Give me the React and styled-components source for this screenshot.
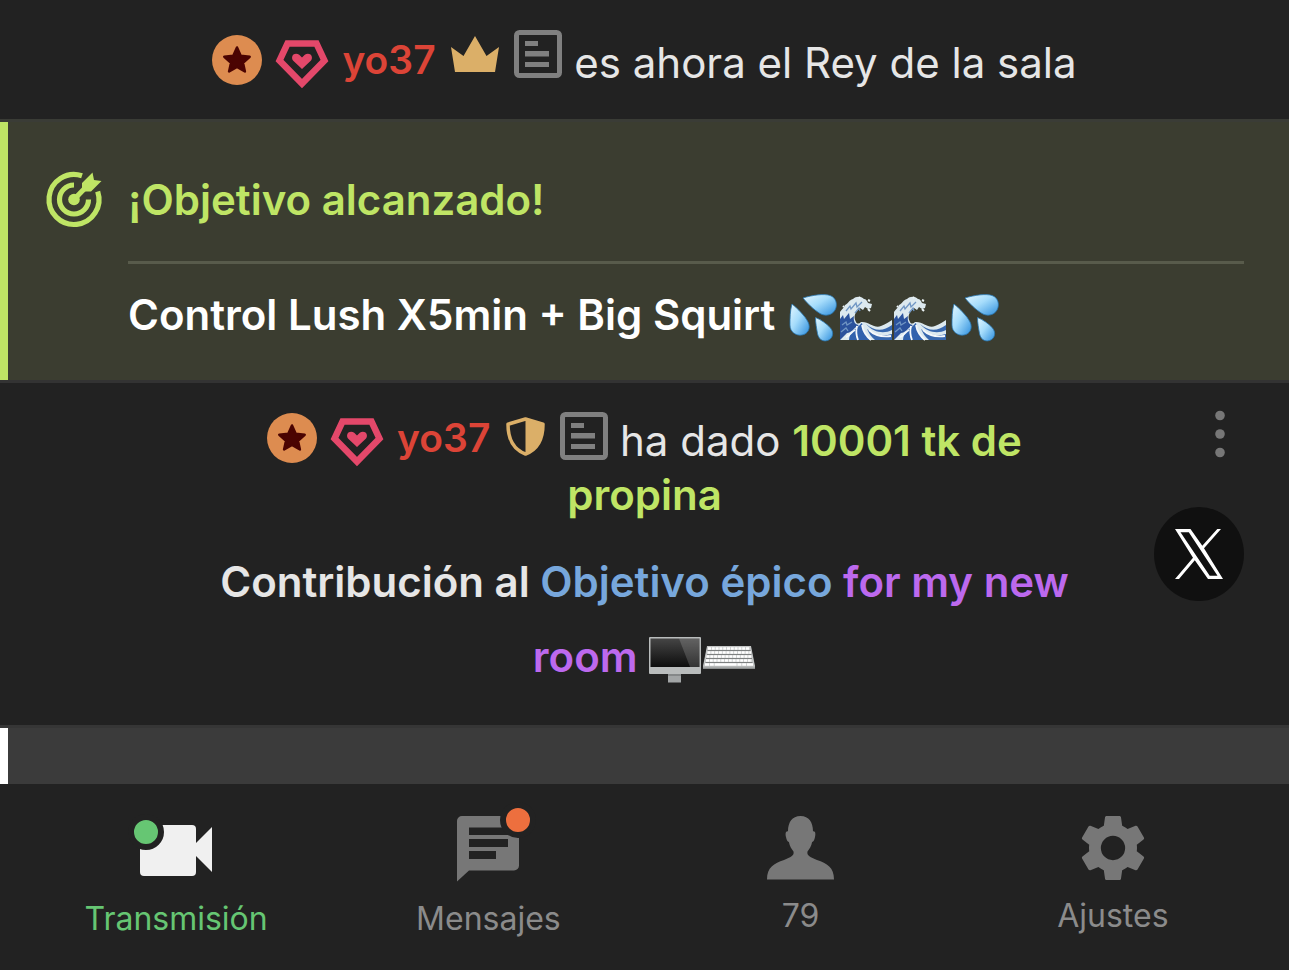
import React from 'react';
import styled, { createGlobalStyle } from 'styled-components';

const GlobalStyle = createGlobalStyle`
  * {
    box-sizing: border-box;
  }
  body {
    margin: 0;
    background: #222222;
    color: #e6e6e6;
    font-family: Inter, 'Liberation Sans', sans-serif;
    font-size: 42px;
    line-height: 54px;
  }
  button {
    border: none;
    background: none;
    padding: 0;
    font: inherit;
    color: inherit;
    cursor: pointer;
  }
  svg {
    display: block;
    flex: none;
    overflow: visible;
  }
`;

const Medal = () => (
  <svg width='50' height='50' viewBox='0 0 50 50' aria-hidden='true'>
    <circle cx='25' cy='25' r='25' fill='#dd8c50' />
    <path
      d='M25 12.500l3.700 8.200 9 1-6.700 6 1.900 8.800-7.900-4.500-7.900 4.500 1.900-8.800-6.700-6 9-1z'
      fill='#4b0402'
      stroke='#4b0402'
      strokeWidth='2.500'
      strokeLinejoin='round'
    />
  </svg>
);

const Gem = () => (
  <svg width='54' height='50' viewBox='0 0 54 50' aria-hidden='true'>
    <path
      d='M12.500 8.500h29l8 17L27 48.500 4.500 25.500z'
      fill='none'
      stroke='#e4486a'
      strokeWidth='6.500'
    />
    <path
      d='M27 34l-9-8.500c-1-1.200-1.200-3-.6-4.500 1-2.800 4.800-3 6.800-1.200L27 22.500l2.800-2.700c2-1.800 5.800-1.600 6.800 1.200.6 1.500.4 3.300-.6 4.500z'
      fill='#e4486a'
    />
  </svg>
);

const Crown = () => (
  <svg width='48' height='36' viewBox='0 0 48 36' aria-hidden='true'>
    <path d='M0 11l12.500 9L24 0l11.500 20L48 11l-4 25H4z' fill='#dbaf68' />
  </svg>
);

const Shield = () => (
  <svg width='39' height='39' viewBox='0 0 39 39' aria-hidden='true'>
    <path
      d='M19.500 2L37 7.200c0 13-3.500 24.500-17.500 29.800C5.500 31.700 2 20.200 2 7.200z'
      fill='none'
      stroke='#dbaf68'
      strokeWidth='3.500'
      strokeLinejoin='round'
    />
    <path d='M19.500 2L37 7.200c0 13-3.500 24.500-17.500 29.800z' fill='#dbaf68' />
  </svg>
);

const LogSheet = () => (
  <svg width='48' height='48' viewBox='0 0 48 48' aria-hidden='true'>
    <rect x='2.500' y='2.500' width='43' height='43' rx='3' fill='none' stroke='#808080' strokeWidth='5' />
    <path d='M11 11h13v5H11zM11 21h24v5.500H11zM11 32h24v5H11z' fill='#808080' />
  </svg>
);

const Target = () => (
  <svg width='55' height='55' viewBox='0 0 55 55' aria-hidden='true'>
    <g fill='none' stroke='#bfe565' strokeWidth='5.200'>
      <path d='M50.700 19.500A25 25 0 1 1 35 3.800' />
      <path d='M41.500 27.500A14.500 14.500 0 1 1 27 13' />
      <path d='M27 27.500L41 13' />
    </g>
    <circle cx='27' cy='27.500' r='5.800' fill='#bfe565' />
    <path d='M35 17v-6L45.500 .5l1.500 7.500 7.500 1L44 19.500h-6.500z' fill='#bfe565' />
  </svg>
);

const Dots = () => (
  <svg width='48' height='46' viewBox='0 0 48 46' aria-hidden='true'>
    <g fill='#777777'>
      <circle cx='24' cy='4.500' r='4.800' />
      <circle cx='24' cy='23' r='4.800' />
      <circle cx='24' cy='41.500' r='4.800' />
    </g>
  </svg>
);

const XLogo = () => (
  <svg width='48' height='50' viewBox='0 0 48 50' aria-hidden='true'>
    <path
      d='M0 0h15.500l11.800 16.800L42.300 0H46L29 19.200 48 50H33L19.800 31.200 4 50H0L18 28.700zM5.500 3.200L34.700 46.800h7.800L13.800 3.200z'
      fill='#ffffff'
      fillRule='evenodd'
    />
  </svg>
);

const Camera = () => (
  <svg width='72' height='70' viewBox='0 0 72 70' aria-hidden='true'>
    <rect x='0' y='12' width='56' height='51' rx='4' fill='#f0f0f0' />
    <path d='M72 14v45L56 43V30z' fill='#f0f0f0' />
  </svg>
);

const Bubble = () => (
  <svg width='62' height='70' viewBox='0 0 62 70' aria-hidden='true'>
    <path
      d='M5 3h52a5 5 0 0 1 5 5v44.500a5 5 0 0 1-5 5H12L0 68.500V8a5 5 0 0 1 5-5zM12 14.500V22h39v-7.500zM12 26v8h39v-8zM12 38v8h27v-8z'
      fill='#777777'
      fillRule='evenodd'
    />
  </svg>
);

const Person = () => (
  <svg width='67' height='64' viewBox='0 0 67 64' aria-hidden='true'>
    <path
      d='M33.500 0C42 0 46 6.500 46 15.200c2.600-.4 2.700 2.600 2 5.800-.6 2.700-1.400 5-2.900 5-.8 4.200-2.700 7-4.600 9.600-1 4.200 3 5.700 9.500 8.400C60 47.500 67 51 67 63.500H0C0 51 7 47.500 17 44c6.500-2.700 10.500-4.200 9.500-8.400-1.900-2.600-3.800-5.400-4.600-9.600-1.500 0-2.300-2.300-2.900-5-.7-3.200-.6-6.200 2-5.800C21 6.500 25 0 33.500 0z'
      fill='#777777'
    />
  </svg>
);

const Gear = () => (
  <svg width='64' height='64' viewBox='2 2 20 20' aria-hidden='true'>
    <path
      d='M19.430 12.980c.04-.32.07-.64.07-.98s-.03-.66-.07-.98l2.110-1.650c.19-.15.24-.42.12-.64l-2-3.460c-.12-.22-.39-.3-.61-.22l-2.490 1c-.52-.4-1.080-.73-1.690-.98l-.38-2.650C14.460 2.180 14.250 2 14 2h-4c-.25 0-.46.18-.49.42l-.38 2.650c-.61.25-1.170.59-1.690.98l-2.490-1c-.23-.09-.49 0-.61.22l-2 3.460c-.13.22-.07.49.12.64l2.110 1.650c-.04.32-.07.65-.07.98s.03.66.07.98l-2.110 1.650c-.19.15-.24.42-.12.64l2 3.460c.12.22.39.3.61.22l2.490-1c.52.4 1.080.73 1.690.98l.38 2.650c.03.24.24.42.49.42h4c.25 0 .46-.18.49-.42l.38-2.650c.61-.25 1.170-.59 1.690-.98l2.490 1c.23.09.49 0 .61-.22l2-3.460c.12-.22.07-.49-.12-.64l-2.110-1.650zM12 15.800a3.800 3.800 0 1 1 0-7.600 3.800 3.800 0 0 1 0 7.600z'
      fill='#777777'
    />
  </svg>
);

const Drops = () => (
  <svg width='54' height='48' viewBox='0 0 54 48' role='img' aria-label='gotas'>
    <defs>
      <linearGradient id='drop' x1='0' y1='0' x2='1' y2='1'>
        <stop offset='0' stopColor='#e4f7ff' />
        <stop offset='.45' stopColor='#a5dcfb' />
        <stop offset='1' stopColor='#2f8fdd' />
      </linearGradient>
    </defs>
    <g fill='url(#drop)' stroke='#2a78b4' strokeWidth='.8'>
      <path d='M17 4C27 1 38-.5 44 1.500c6 2 8 9 5 14.500-3 5.500-10 6.500-15 3.500C28 16 21 9 17 4z' />
      <path d='M6 10c6 5 13 12 16 18 3 6 0 12-6 13S4 38 4 31 4 17 6 10z' />
      <path d='M29.500 23.500c5 2 11 6 15 10.500 4 5 2 11-3 12.500-5 1.500-9-1.500-10-7s-2-11-2-16z' />
    </g>
  </svg>
);

const Wave = () => (
  <svg width='54' height='48' viewBox='0 0 54 48' role='img' aria-label='ola'>
    <path
      d='M0 46V18c2-3 4-4 5-7 3-1 4-5 8-6 3-3 8-3 11 0 2 0 3 2 4 4l4 1-1 4-3 1-3-2-2 3-3-2-3 3c-3 4-3 7-1 11 1 2 3 2 5 0 8-1 13 7 20 4 5-2 8-4 11-6v20z'
      fill='#dce9ef'
    />
    <path d='M0 25l3-4 1 4 5-6 1 6 4-3c-1 5 1 9 5 9-5 3-8 8-12 8l-7 7z' fill='#2b529c' />
    <path d='M13 36c4-1 7-6 9-7 1 6 3 12 8 17H9c0-4 2-7 4-10z' fill='#3161ad' />
    <path d='M26 30c8 7 17 8 26 1v5c-8 4-18 3-26-6zM27 35c6 5 14 8 25 5v6H35c-4-3-6-7-8-11z' fill='#3767ae' />
    <path d='M6 17l4-5 1 3 5-6 1 4 5-5M15 19l4-5 1 3M2 31l4-3 1 3 5-3M1 38l5-4 2 3' fill='none' stroke='#7096c4' strokeWidth='1.300' />
    <path d='M17 32c-1 4-1 9 1 14M22 31c1 6 4 11 9 15M29 36c5 5 13 7 22 6M6 43c4-1 5-5 9-7' fill='none' stroke='#f4f8fb' strokeWidth='1.800' />
    <path d='M3 12l1 1M19 3l1 1M28 6l2 1M28 15l2 2' stroke='#edf6f8' strokeWidth='2' />
  </svg>
);

const Desktop = () => (
  <svg width='54' height='48' viewBox='0 0 54 48' role='img' aria-label='ordenador'>
    <defs>
      <linearGradient id='screen' x1='0' y1='0' x2='0' y2='1'>
        <stop offset='0' stopColor='#454545' />
        <stop offset='1' stopColor='#0d0d0d' />
      </linearGradient>
    </defs>
    <rect x='1' y='1' width='52' height='37' rx='1' fill='#b9bcbc' />
    <rect x='2.500' y='2.500' width='49' height='28.500' fill='url(#screen)' />
    <path d='M31 2.500h20.500V31H42z' fill='#ffffff' opacity='.16' />
    <path d='M20 38h13v8.500H20z' fill='#a2a5a6' />
    <path d='M20 38h13v2H20z' fill='#858889' />
  </svg>
);

const Keyboard = () => (
  <svg width='54' height='48' viewBox='0 0 54 48' role='img' aria-label='teclado'>
    <path d='M5 10h44l4 20v2.500H1V30z' fill='#c4c6c6' />
    <path d='M1 30.500h52v2H1z' fill='#a5a8a8' />
    <g fill='none' stroke='#ffffff' strokeWidth='2.600' strokeDasharray='3 .8'>
      <path d='M6 12.500h42M5.500 16.500h43.500M4.500 20.500h45M4 24.500h46' />
      <path d='M3 28.500h48' strokeDasharray='4 .8 4 .8 22 .8' />
    </g>
    <path d='M5.500 14.500h43M5 18.500h44.500M4 22.500h46M3.500 26.500h47' stroke='#7d8080' strokeWidth='1' />
  </svg>
);

function User({ name }) {
  return (
    <UserTag>
      <Medal />
      <Gem />
      <UserName href='#yo37'>{name}</UserName>
    </UserTag>
  );
}

function NavItem({ icon, label, dot, active }) {
  return (
    <NavButton type='button' $active={active}>
      <NavIcon>
        {icon}
        {dot && <Dot $side={dot} />}
      </NavIcon>
      {label}
    </NavButton>
  );
}

function App() {
  return (
    <Screen>
      <GlobalStyle />
      <Feed>
        <Notice>
          <User name='yo37' />{' '}
          <Rank $raised>
            <Crown />
            <LogSheet />
          </Rank>{' '}
          es ahora el Rey de la sala
        </Notice>
        <Goal>
          <Target />
          <GoalTitle>¡Objetivo alcanzado!</GoalTitle>
          <GoalText>
            Control Lush X5min + Big Squirt{' '}
            <Emojis>
              <Drops />
              <Wave />
              <Wave />
              <Drops />
            </Emojis>
          </GoalText>
        </Goal>
        <Tip>
          <TipBody>
            <TipLine>
              <User name='yo37' />{' '}
              <Rank>
                <Shield />
                <LogSheet />
              </Rank>{' '}
              ha dado <Amount>10001 tk de propina</Amount>
            </TipLine>
            <Contribution>
              Contribución al <GoalLink href='#objetivo'>Objetivo épico</GoalLink>{' '}
              <Reason>
                for my new room{' '}
                <Emojis>
                  <Desktop />
                  <Keyboard />
                </Emojis>
              </Reason>
            </Contribution>
          </TipBody>
          <Actions>
            <button type='button' aria-label='Más opciones'>
              <Dots />
            </button>
            <ShareButton type='button' aria-label='Compartir en X'>
              <XLogo />
            </ShareButton>
          </Actions>
        </Tip>
        <NextMessage />
      </Feed>
      <Nav>
        <NavItem icon={<Camera />} label='Transmisión' dot='left' active />
        <NavItem icon={<Bubble />} label='Mensajes' dot='right' />
        <NavItem icon={<Person />} label='79' />
        <NavItem icon={<Gear />} label='Ajustes' />
      </Nav>
    </Screen>
  );
}

const Screen = styled.div`
  display: flex;
  flex-direction: column;
  min-height: 100vh;
`;

const Feed = styled.main`
  display: flex;
  flex-direction: column;
  flex: 1;
`;

const Notice = styled.p`
  margin: 0;
  padding: 30px 20px 29px;
  text-align: center;
`;

const UserTag = styled.span`
  display: inline-flex;
  align-items: center;
  gap: 13px;
  line-height: 50px;
  vertical-align: -7px;
`;

const UserName = styled.a`
  color: #dc4437;
  font-size: 39px;
  font-weight: 600;
  text-decoration: none;
`;

const Rank = styled.span`
  display: inline-flex;
  align-items: center;
  gap: 15px;
  margin-left: 4px;
  vertical-align: ${(props) => (props.$raised ? '6px' : 'baseline')};
`;

const Goal = styled.section`
  display: grid;
  grid-template-columns: 55px 1fr;
  column-gap: 26px;
  align-items: center;
  padding: 50px 45px 38px 47px;
  border-top: 3px solid #3a3c36;
  background: #3b3d30;
  box-shadow: inset 8px 0 0 #bfe565;
`;

const GoalTitle = styled.h2`
  margin: 0;
  color: #bfe565;
  font-size: 42px;
  font-weight: 600;
`;

const GoalText = styled.p`
  grid-column: 2;
  margin: 34px 0 0;
  padding-top: 24px;
  border-top: 3px solid #585b4b;
  color: #ffffff;
  font-weight: 600;
`;

const Emojis = styled.span`
  display: inline-flex;
  vertical-align: -12px;
`;

const Tip = styled.article`
  display: grid;
  grid-template-columns: 200px 1fr 200px;
  border-top: 3px solid #333333;
`;

const TipBody = styled.div`
  grid-column: 2;
  padding: 29px 0 31px;
  text-align: center;
`;

const TipLine = styled.p`
  margin: 0;
`;

const Amount = styled.strong`
  color: #bfe565;
  font-weight: 600;
`;

const Contribution = styled.p`
  margin: 22px 0 0;
  font-weight: 600;
  line-height: 75px;
`;

const GoalLink = styled.a`
  color: #77a7dc;
  text-decoration: none;
`;

const Reason = styled.span`
  color: #bc69ee;
`;

const Actions = styled.div`
  display: flex;
  flex-direction: column;
  align-items: flex-end;
  gap: 50px;
  padding: 28px 45px 0 0;
`;

const ShareButton = styled.button`
  display: grid;
  place-items: center;
  width: 90px;
  height: 94px;
  border-radius: 50%;
  background: #101010;
`;

const NextMessage = styled.div`
  flex: 1;
  min-height: 40px;
  border-top: 3px solid #363636;
  background: #3b3b3b;
  box-shadow: inset 8px 0 0 #ffffff;
`;

const Nav = styled.nav`
  display: grid;
  grid-template-columns: repeat(4, 1fr);
  align-items: center;
  padding: 29px 20px 31px;
  background: #222222;
`;

const NavButton = styled.button`
  display: flex;
  flex-direction: column;
  align-items: center;
  gap: 16px;
  color: ${(props) => (props.$active ? '#66c673' : '#8b8b8b')};
  font-size: 32px;
  line-height: 40px;
`;

const NavIcon = styled.span`
  position: relative;
`;

const Dot = styled.span`
  position: absolute;
  top: ${(props) => (props.$side === 'left' ? '1px' : '-11px')};
  ${(props) => props.$side}: ${(props) => (props.$side === 'left' ? '-12px' : '-17px')};
  width: 36px;
  height: 36px;
  border: 6px solid #222222;
  border-radius: 50%;
  background: ${(props) => (props.$side === 'left' ? '#66c673' : '#ed6f3e')};
`;

export default App;
